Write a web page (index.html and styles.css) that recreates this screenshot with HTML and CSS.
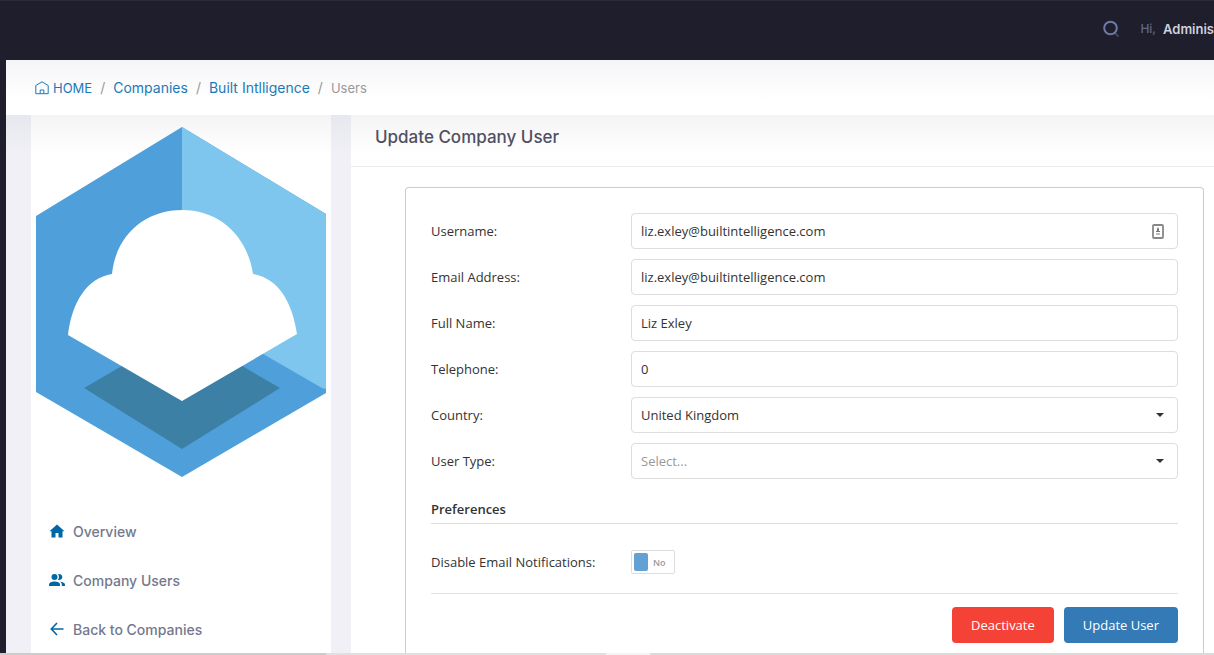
FILE: index.html
```html
<!DOCTYPE html>
<html lang="en">
<head>
<meta charset="utf-8">
<title>Update Company User</title>
<link rel="stylesheet" href="styles.css">
</head>
<body>
<div class="app">
  <header class="topbar">
    <button class="search" type="button" aria-label="Search">
      <svg width="18" height="18" viewBox="0 0 18 18" fill="none" stroke-linecap="round"><path d="M13 13l3 3" stroke="#41455f" stroke-width="2"/><circle cx="8.500" cy="8" r="6.300" stroke="#6c7aa5" stroke-width="2"/></svg>
    </button>
    <div class="greeting"><span class="hi">Hi,</span><span class="name">Adminis</span></div>
  </header>
  <nav class="breadcrumb" aria-label="Breadcrumb">
    <a class="home" href="#"><svg width="14" height="14" viewBox="0 0 14 14" fill="none" stroke="#1a7ab8"><path d="M.8 4.500L7 .8l6.200 3.700v8.200H.8zM5.200 12.500V9h3.600v3.500"/></svg>HOME</a>
    <span class="sep">/</span><a href="#">Companies</a>
    <span class="sep">/</span><a href="#">Built Intlligence</a>
    <span class="sep">/</span><span class="current">Users</span>
  </nav>
  <div class="content">
    <aside class="sidebar">
      <svg class="logo" viewBox="0 0 290 350" role="img" aria-label="Company logo">
        <path fill="#4fa0da" d="M146 0L0 89v176l146 85 144-84V87z"/>
        <path fill="#7ec6ee" d="M146 0l144 87v175l-4-1-140-81z"/>
        <path fill="#3d80a5" d="M48 261l98-57 98 57-98 61z"/>
        <path fill="#fff" d="M32 208C36 175 51 151 76 147C80 108 109 83 146 83S211 108 217 147C242 151 256 174 261 207L146 274z"/>
      </svg>
      <nav class="menu" aria-label="Company">
        <a href="#"><svg width="16" height="16" viewBox="0 0 16 16" fill="#0067a5"><path d="M8 1.500L.5 8.300h2v6.200h4V10h3v4.500h4V8.300h2z"/></svg>Overview</a>
        <a href="#"><svg width="16" height="16" viewBox="0 0 16 16" fill="#0067a5"><circle cx="5.500" cy="5" r="3"/><path d="M9 2.300a3 3 0 1 1 0 5.400c1.300-1.600 1.300-3.800 0-5.400zM0 14v-1.500C0 10.500 2.500 9.500 5.500 9.500s5.500 1 5.500 3V14zM11 9.700c3 .2 5 1.200 5 3V14h-3.200v-1.500c0-1.200-.7-2.100-1.800-2.800z"/></svg>Company Users</a>
        <a href="#"><svg width="16" height="16" viewBox="0 0 16 16" fill="none" stroke="#0067a5" stroke-width="1.600"><path d="M14.500 8H2.500M8 2L2.300 8 8 14"/></svg>Back to Companies</a>
      </nav>
    </aside>
    <main class="panel">
      <h1>Update Company User</h1>
      <form class="card">
        <div class="row"><label for="username">Username:</label>
          <div class="field"><input id="username" type="text" value="liz.exley@builtintelligence.com">
            <svg class="mark" width="12" height="15" viewBox="0 0 12 15"><rect x="1" y="1" width="10" height="13" rx="1" fill="#fff" stroke="#888" stroke-width="1.800"/><path d="M6 3l1 2v2h1v1H4V7h1V5z" fill="#777"/><path d="M4 9h4v2H4z" fill="#bbb"/></svg></div></div>
        <div class="row"><label for="email">Email Address:</label>
          <div class="field"><input id="email" type="text" value="liz.exley@builtintelligence.com"></div></div>
        <div class="row"><label for="fullname">Full Name:</label>
          <div class="field"><input id="fullname" type="text" value="Liz Exley"></div></div>
        <div class="row"><label for="phone">Telephone:</label>
          <div class="field"><input id="phone" type="text" value="0"></div></div>
        <div class="row"><label for="country">Country:</label>
          <div class="field"><select id="country"><option>United Kingdom</option></select>
            <svg class="mark" width="8" height="4" viewBox="0 0 8 4"><path d="M0 0h8L4 4z" fill="#333"/></svg></div></div>
        <div class="row"><label for="type">User Type:</label>
          <div class="field"><select id="type" class="empty"><option>Select...</option></select>
            <svg class="mark" width="8" height="4" viewBox="0 0 8 4"><path d="M0 0h8L4 4z" fill="#333"/></svg></div></div>
        <h2>Preferences</h2>
        <div class="row prefs"><label for="disable">Disable Email Notifications:</label>
          <div class="switch"><input id="disable" type="checkbox"><span>No</span></div></div>
        <div class="actions">
          <button class="danger" type="button">Deactivate</button>
          <button class="primary" type="button">Update User</button>
        </div>
      </form>
    </main>
  </div>
  <div class="edge"></div>
</div>
</body>
</html>
```
FILE: styles.css
```css
* { box-sizing: border-box; }
body { margin: 0; background: #1e1e2d; font-family: Inter, sans-serif; font-size: 14px; overflow: hidden; }
a { text-decoration: none; }
button, input, select { font: inherit; }
.app { min-height: 100vh; display: flex; flex-direction: column; }

.topbar { height: 60px; padding-bottom: 4px; display: flex; align-items: center; justify-content: flex-end; gap: 20px; border-top: 1px solid #2a2a39; overflow: hidden; }
.search { display: flex; padding: 0; border: 0; background: none; }
.greeting { display: flex; align-items: center; gap: 7px; white-space: nowrap; }
.hi { color: #636782; font-size: 12px; font-weight: 500; }
.name { color: #cfd0dc; font-size: 13px; font-weight: 600; }

.breadcrumb { margin-left: 6px; height: 55px; padding: 0 29px; display: flex; align-items: center; gap: 8px; background: linear-gradient(#f5f5f8, #fff 40px); color: #999; white-space: nowrap; font-size: 14px; }
.breadcrumb a { color: #1a7ab8; }
.breadcrumb .home { display: flex; align-items: center; gap: 4px; font-size: 13px; }
.current { font-size: 13px; }

.content { flex: 1; margin-left: 6px; padding-left: 25px; display: flex; gap: 20px; background: linear-gradient(#e7e7ee, #f0f0f6 40px); }
.sidebar { width: 300px; flex: none; padding: 12px 5px 0; background: linear-gradient(#f4f4f6, #fff 40px); }
.logo { display: block; width: 100%; }
.menu { padding: 30px 13px 0; display: flex; flex-direction: column; gap: 1px; }
.menu a { height: 48px; display: flex; align-items: center; gap: 8px; color: #74788d; font-weight: 500; font-size: 14px; }

.panel { flex: 1; min-width: 0; background: linear-gradient(#f4f4f6, #fff 40px); }
h1 { margin: 0; height: 52px; padding: 12px 24px; border-bottom: 1px solid #ebebf2; color: #4f5063; font-size: 17px; line-height: 20px; font-weight: 500; }
.card { margin: 20px 10px 0 54px; padding: 25px 25px 10px; border: 1px solid #ccc; border-bottom: 0; border-radius: 4px 4px 0 0; font-family: "Open Sans", sans-serif; font-size: 13px; color: #333; }
.row { display: flex; align-items: center; margin-bottom: 10px; }
.row label { width: 200px; flex: none; }
.field { flex: 1; position: relative; }
.field input, .field select { display: block; width: 100%; height: 36px; padding: 0 9px; border: 1px solid #ddd; border-radius: 4px; background: #fff; color: #333; appearance: none; }
.field .empty { color: #999; }
.mark { position: absolute; right: 14px; top: 0; bottom: 0; margin: auto 0; pointer-events: none; }
h2 { margin: 20px 0 0; height: 25px; border-bottom: 1px solid #ddd; font-size: 13px; line-height: 20px; font-weight: 600; }
.prefs { margin: 26px 0 19px; }
.switch { width: 44px; height: 24px; padding: 2px; display: flex; align-items: center; gap: 5px; border: 1px solid #ddd; border-radius: 2px; color: #999; font-size: 9px; font-weight: 600; }
.switch input { appearance: none; margin: 0; width: 14px; height: 18px; border-radius: 2px; background: #63a0d4; }
.actions { display: flex; justify-content: flex-end; gap: 10px; padding-top: 13px; border-top: 1px solid #e3e3e3; }
.actions button { height: 36px; padding: 0 19px; border: 0; border-radius: 4px; color: #fff; }
.danger { background: #f44336; }
.primary { background: #337ab7; }
.edge { height: 2px; background: linear-gradient(90deg, #ccc 326px, #e0e0e0 326px 606px, #f4f4f4 606px 650px, #dadada 650px); }
```
